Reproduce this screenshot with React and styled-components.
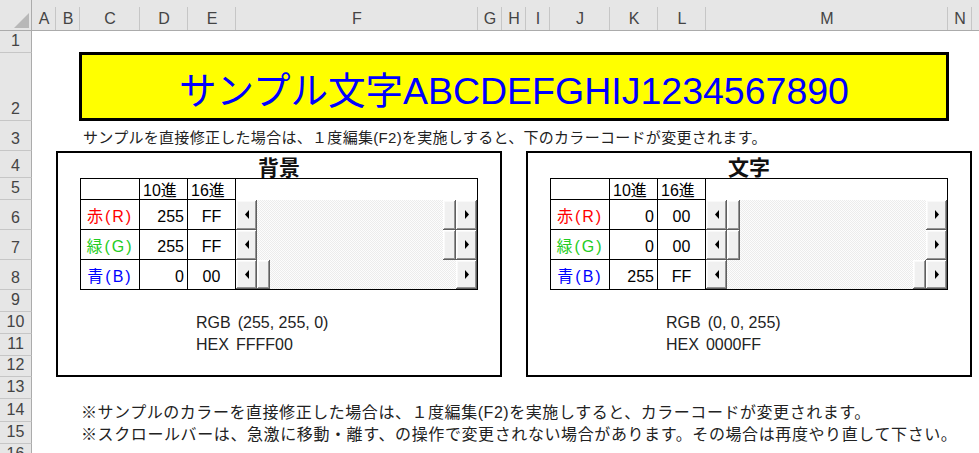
import React from 'react'
import styled, { createGlobalStyle } from 'styled-components'

// sheet geometry (px), Excel-like
const COLS = [
  ['A', 24], ['B', 24], ['C', 60], ['D', 48], ['E', 48], ['F', 242], ['G', 24],
  ['H', 24], ['I', 24], ['J', 60], ['K', 48], ['L', 48], ['M', 242], ['N', 24], ['O', 64],
]
const ROWS = [22, 68, 30, 27, 22, 30, 30, 30, 22, 22, 22, 21, 22, 23, 22, 22]

const col = (letter) => COLS.findIndex((c) => c[0] === letter) + 2
const row = (n) => n + 1

const PANELS = [
  { title: '背景', from: 'B', values: [255, 255, 0] },
  { title: '文字', from: 'I', values: [0, 0, 255] },
]

const CHANNELS = [
  { label: '赤(R)', color: '#ff0000' },
  { label: '緑(G)', color: '#22cc22' },
  { label: '青(B)', color: '#0000ff' },
]

const toHex = (v) => v.toString(16).toUpperCase().padStart(2, '0')

const GlobalStyle = createGlobalStyle`
  html, body {
    margin: 0;
    padding: 0;
    background: #fff;
  }
  body {
    font-family: "Liberation Sans", "Noto Sans CJK JP", sans-serif;
    color: #000;
  }
`

const Sheet = styled.div`
  display: grid;
  grid-template-columns: 32px ${COLS.map((c) => c[1] + 'px').join(' ')};
  grid-template-rows: 31px ${ROWS.map((r) => r + 'px').join(' ')};
  width: 979px;
  height: 453px;
  overflow: hidden;
  background: #fff;
`

const Corner = styled.div`
  grid-column: 1;
  grid-row: 1;
  background: #e6e6e6;
  border-right: 1px solid #ababab;
  border-bottom: 1px solid #ababab;
  display: flex;
  align-items: flex-end;
  justify-content: flex-end;
  padding: 0 2px 2px 0;
`

const ColHead = styled.div`
  grid-row: 1;
  grid-column: ${(p) => p.$col};
  background: linear-gradient(#c6c6c6, #c6c6c6) no-repeat right bottom / 1px 23px, #e6e6e6;
  border-bottom: 1px solid #ababab;
  display: flex;
  align-items: center;
  justify-content: center;
  padding-top: 8px;
  font-size: 16px;
  color: #444;
`

const RowHead = styled.div`
  grid-column: 1;
  grid-row: ${(p) => p.$row};
  background: #e6e6e6;
  border-right: 1px solid #ababab;
  border-bottom: 1px solid #c6c6c6;
  display: flex;
  align-items: flex-end;
  justify-content: center;
  padding-bottom: 2px;
  font-size: 16px;
  line-height: 18px;
  color: #444;
`

const Banner = styled.div`
  grid-column: ${col('C')} / ${col('M') + 1};
  grid-row: ${row(2)};
  margin: -1px -1px 0 -1px;
  border: 3px solid #000;
  background: #ffff00;
  display: flex;
  align-items: center;
  justify-content: center;
  padding-top: 2px;
  color: #0000ff;
  font-size: 37.5px;
  white-space: nowrap;
`

const Note = styled.div`
  grid-column: ${col('C')} / -1;
  grid-row: ${(p) => p.$row};
  display: flex;
  align-items: center;
  padding-left: ${(p) => p.$indent}px;
  font-size: ${(p) => p.$size}px;
  letter-spacing: ${(p) => p.$track || 0}px;
  color: #222;
  white-space: nowrap;
`

const Panel = styled.section`
  grid-column: ${(p) => p.$from} / span 6;
  grid-row: ${row(4)} / span 9;
  display: grid;
  grid-template-columns: subgrid;
  grid-template-rows: subgrid;
  border: 2px solid #000;
`

const Title = styled.h2`
  grid-column: 1 / -1;
  grid-row: 1;
  margin: 0;
  display: flex;
  align-items: flex-end;
  justify-content: center;
  font-size: 21px;
  line-height: 1;
  font-weight: bold;
  color: #111;
`

const Table = styled.div`
  grid-column: 2 / span 4;
  grid-row: 2 / span 4;
  display: grid;
  grid-template-columns: subgrid;
  grid-template-rows: subgrid;
  border: 1px solid #000;
`

const Cell = styled.div`
  display: flex;
  align-items: center;
  justify-content: ${(p) => p.$align || 'center'};
  padding: ${(p) => (p.$head ? '3px 3px 0' : '4px 3px 0')};
  border-right: ${(p) => (p.$noRight ? 'none' : '1px solid #000')};
  border-bottom: ${(p) => (p.$noBottom ? 'none' : '1px solid #000')};
  font-size: 16px;
  line-height: 18px;
  letter-spacing: ${(p) => p.$track || 0}px;
  color: ${(p) => p.$color || '#000'};
  white-space: nowrap;
`

const Scroll = styled.div`
  display: flex;
  min-width: 0;
`

const bevel = `
  background: #f0f0f0;
  box-shadow:
    inset -1px -1px #5f5f5f,
    inset 1px 1px #ffffff,
    inset -2px -2px #939393,
    inset 2px 2px #f9f9f9;
`

const ArrowBtn = styled.div`
  flex: 0 0 21px;
  ${bevel}
  display: flex;
  align-items: center;
  justify-content: center;
  padding-bottom: 1px;
`

const Track = styled.div`
  flex: 1;
  display: flex;
  min-width: 0;
  background: repeating-conic-gradient(#ececec 0 25%, #fdfdfd 0 50%) 0 0 / 2px 2px;
`

const Thumb = styled.div`
  flex: 0 0 13px;
  margin-left: calc((100% - 13px) * ${(p) => p.$f});
  ${bevel}
`

const Readout = styled.div`
  grid-column: 4 / -1;
  grid-row: ${(p) => p.$row};
  display: flex;
  align-items: center;
  padding-left: 8px;
  font-size: 16px;
  color: #222;
  white-space: nowrap;
`

const Key = styled.span`
  margin-right: 7px;
`

function Arrow({ dir }) {
  const pts = dir === 'left' ? '5,0 5,9 1,4.5' : '1,0 1,9 5,4.5'
  return (
    <svg width="6" height="9" viewBox="0 0 6 9">
      <polygon points={pts} fill="#000" />
    </svg>
  )
}

function ScrollBar({ value }) {
  return (
    <Scroll>
      <ArrowBtn>
        <Arrow dir="left" />
      </ArrowBtn>
      <Track>
        <Thumb $f={value / 255} />
      </Track>
      <ArrowBtn>
        <Arrow dir="right" />
      </ArrowBtn>
    </Scroll>
  )
}

function ColorPanel({ title, from, values }) {
  return (
    <Panel $from={col(from)}>
      <Title>{title}</Title>
      <Table>
        <Cell $head />
        <Cell $head $align="flex-start">10進</Cell>
        <Cell $head $align="flex-start">16進</Cell>
        <Cell $head $noRight $noBottom />
        {CHANNELS.map((ch, i) => {
          const last = i === CHANNELS.length - 1
          return (
            <React.Fragment key={ch.label}>
              <Cell $color={ch.color} $track={2} $noBottom={last}>{ch.label}</Cell>
              <Cell $align="flex-end" $noBottom={last}>{values[i]}</Cell>
              <Cell $noBottom={last}>{toHex(values[i])}</Cell>
              <ScrollBar value={values[i]} />
            </React.Fragment>
          )
        })}
      </Table>
      <Readout $row={7}>
        <Key>RGB</Key>({values.join(', ')})
      </Readout>
      <Readout $row={8}>
        <Key>HEX</Key>{values.map(toHex).join('')}
      </Readout>
    </Panel>
  )
}

export default function App() {
  return (
    <>
      <GlobalStyle />
      <Sheet>
        <Corner>
          <svg width="15" height="15" viewBox="0 0 15 15">
            <polygon points="0,15 15,15 15,0" fill="#b8b8b8" />
          </svg>
        </Corner>
        {COLS.map(([letter], i) => (
          <ColHead key={letter} $col={i + 2}>{letter === 'O' ? '' : letter}</ColHead>
        ))}
        {ROWS.map((_, i) => (
          <RowHead key={i} $row={row(i + 1)}>{i + 1}</RowHead>
        ))}

        <Banner>サンプル文字ABCDEFGHIJ1234567890</Banner>

        <Note $row={row(3)} $size={15} $indent={3} $track={0.3}>
          サンプルを直接修正した場合は、１度編集(F2)を実施しすると、下のカラーコードが変更されます。
        </Note>

        {PANELS.map((p) => (
          <ColorPanel key={p.title} {...p} />
        ))}

        <Note $row={row(14)} $size={16} $indent={1} $track={0.55}>
          ※サンプルのカラーを直接修正した場合は、１度編集(F2)を実施しすると、カラーコードが変更されます。
        </Note>
        <Note $row={row(15)} $size={16} $indent={1} $track={0.6}>
          ※スクロールバーは、急激に移動・離す、の操作で変更されない場合があります。その場合は再度やり直して下さい。
        </Note>
      </Sheet>
    </>
  )
}
